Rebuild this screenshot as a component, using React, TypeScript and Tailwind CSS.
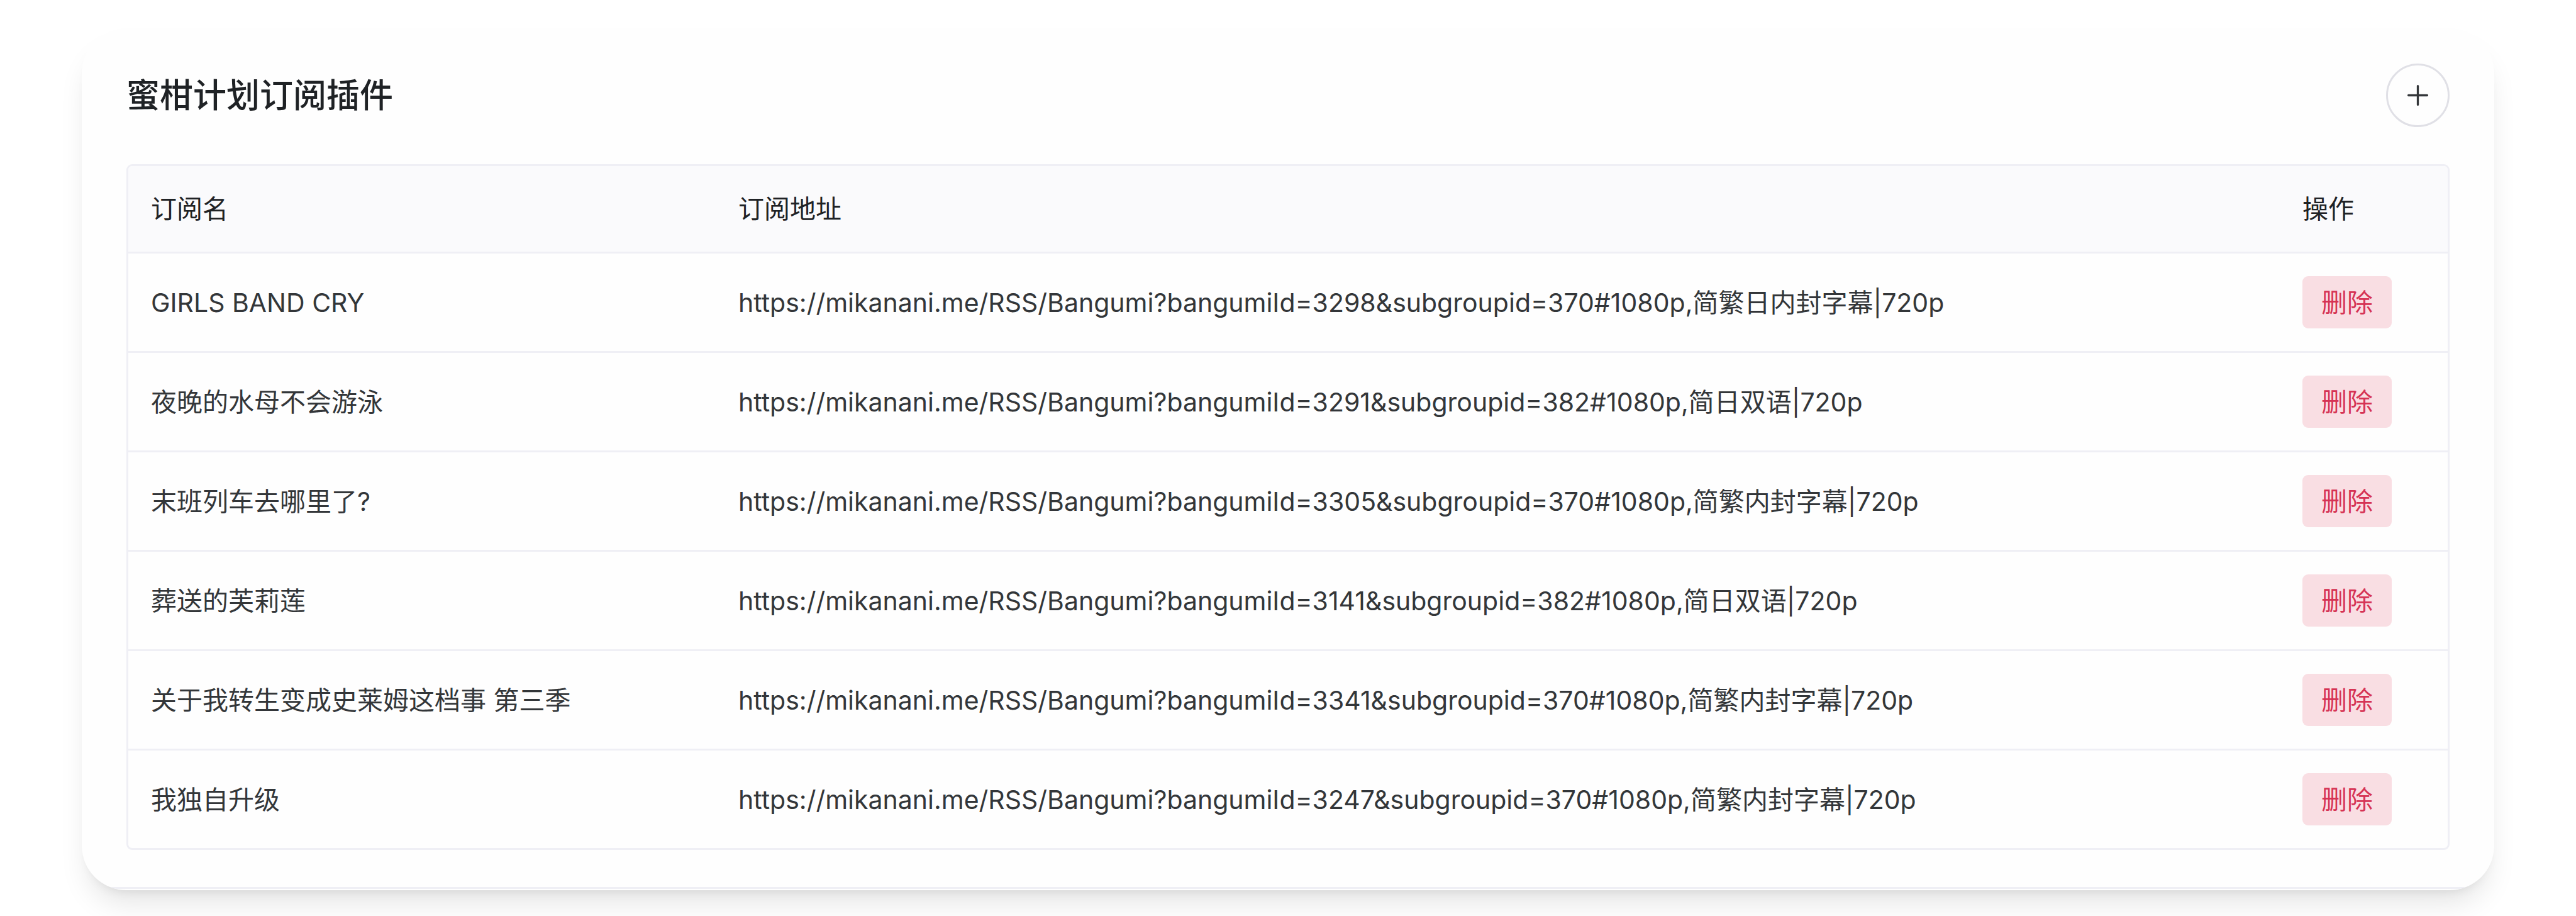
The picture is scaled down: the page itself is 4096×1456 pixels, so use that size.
type Subscription = { name: string; url: string };

const subscriptions: Subscription[] = [
  {
    name: "GIRLS BAND CRY",
    url: "https://mikanani.me/RSS/Bangumi?bangumiId=3298&subgroupid=370#1080p,简繁日内封字幕|720p",
  },
  {
    name: "夜晚的水母不会游泳",
    url: "https://mikanani.me/RSS/Bangumi?bangumiId=3291&subgroupid=382#1080p,简日双语|720p",
  },
  {
    name: "末班列车去哪里了?",
    url: "https://mikanani.me/RSS/Bangumi?bangumiId=3305&subgroupid=370#1080p,简繁内封字幕|720p",
  },
  {
    name: "葬送的芙莉莲",
    url: "https://mikanani.me/RSS/Bangumi?bangumiId=3141&subgroupid=382#1080p,简日双语|720p",
  },
  {
    name: "关于我转生变成史莱姆这档事 第三季",
    url: "https://mikanani.me/RSS/Bangumi?bangumiId=3341&subgroupid=370#1080p,简繁内封字幕|720p",
  },
  {
    name: "我独自升级",
    url: "https://mikanani.me/RSS/Bangumi?bangumiId=3247&subgroupid=370#1080p,简繁内封字幕|720p",
  },
];

function PlusIcon() {
  return (
    <svg viewBox="0 0 512 512" className="size-[53px]" fill="none" stroke="currentColor" strokeWidth="32" strokeLinecap="round" aria-hidden="true">
      <path d="M256 112v288M400 256H112" />
    </svg>
  );
}

function SubscriptionRow({ name, url }: Subscription) {
  return (
    <tr className="group">
      <td className="border-b-[3px] border-[#efeff5] px-9 py-9 group-last:border-b-0">{name}</td>
      <td className="border-b-[3px] border-[#efeff5] px-9 py-9 group-last:border-b-0">{url}</td>
      <td className="border-b-[3px] border-[#efeff5] px-9 py-9 group-last:border-b-0">
        <button
          type="button"
          aria-label={`删除 ${name}`}
          className="flex h-[83px] items-center rounded-[9px] bg-[#f9dee3] px-[30px] whitespace-nowrap text-[#d63354]"
        >
          删除
        </button>
      </td>
    </tr>
  );
}

export default function App() {
  return (
    <main className="min-h-screen bg-white px-[130px] pt-[45px] pb-[41px] font-['Inter','Noto_Sans_CJK_SC',sans-serif] text-[41px] leading-[66px] text-[#333639]">
      <section className="overflow-hidden rounded-[71px] bg-[#fefefe] pb-[2px] shadow-[0_30px_45px_-9px_rgba(0,0,0,0.1),0_12px_18px_-12px_rgba(0,0,0,0.1)]">
        <div className="border-b-[3px] border-[#efeff5] px-[71px] pt-[56px] pb-[59px]">
          <header className="mb-[59px] flex items-center justify-between">
            <h1 className="text-[53px] leading-[66px] font-medium text-[#1f2225]">蜜柑计划订阅插件</h1>
            <button
              type="button"
              aria-label="添加订阅"
              className="flex size-[101px] items-center justify-center rounded-full border-[3px] border-[#e0e0e6]"
            >
              <PlusIcon />
            </button>
          </header>

          <div className="overflow-hidden rounded-[9px] border-[3px] border-[#efeff5]">
            <table className="w-full table-fixed border-separate border-spacing-0 text-left">
              <colgroup>
                <col className="w-[934px]" />
                <col />
                <col className="w-[267px]" />
              </colgroup>
              <thead className="bg-[#fafafc] text-[#1f2225]">
                <tr>
                  <th scope="col" className="border-b-[3px] border-[#efeff5] px-9 py-[35px] font-normal">订阅名</th>
                  <th scope="col" className="border-b-[3px] border-[#efeff5] px-9 py-[35px] font-normal">订阅地址</th>
                  <th scope="col" className="border-b-[3px] border-[#efeff5] px-9 py-[35px] font-normal">操作</th>
                </tr>
              </thead>
              <tbody>
                {subscriptions.map((item) => (
                  <SubscriptionRow key={item.name} {...item} />
                ))}
              </tbody>
            </table>
          </div>
        </div>
      </section>
    </main>
  );
}
